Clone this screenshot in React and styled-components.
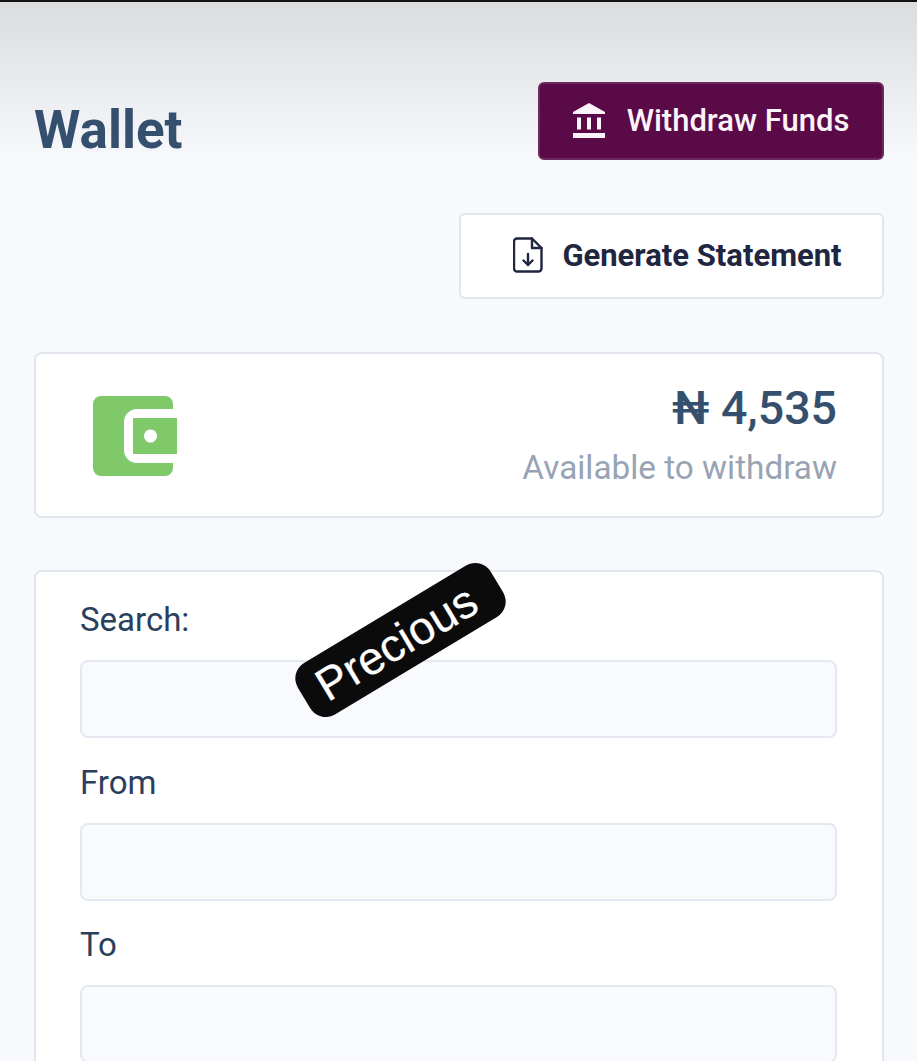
import styled, { createGlobalStyle } from "styled-components";

const GlobalStyle = createGlobalStyle`
  html, body {
    margin: 0;
    height: 100%;
    overflow: hidden;
    background: #f8f9fd;
    font-family: Roboto, "Liberation Sans", sans-serif;
  }
  * { box-sizing: border-box; }
`;

const Page = styled.div`
  position: relative;
  height: 1061px;
  padding: 80px 33px 0 34px;
  overflow: hidden;
  border-top: 2px solid #111;
  background: linear-gradient(#dbdcde 0, #e6e7e9 60px, #f8f9fd 160px);
`;

const Header = styled.header`
  display: flex;
  justify-content: space-between;
  align-items: flex-start;
`;

const Title = styled.h1`
  margin: 17px 0 0;
  font-size: 53px;
  line-height: 62px;
  font-weight: 700;
  color: #35506e;
`;

const Button = styled.button`
  display: flex;
  align-items: center;
  justify-content: center;
  gap: ${(p) => p.$gap}px;
  width: ${(p) => p.$width}px;
  height: ${(p) => p.$height}px;
  padding: 0 0 2px ${(p) => p.$indent || 0}px;
  font-family: inherit;
  font-size: 31px;
  font-weight: ${(p) => p.$weight};
  border-radius: 6px;
  color: ${(p) => (p.$primary ? "#fbf4f9" : "#1f2640")};
  background: ${(p) => (p.$primary ? "#5b0a48" : "#fff")};
  border: 2px solid ${(p) => (p.$primary ? "#6d2a5d" : "#e1e5ee")};
`;

const ActionRow = styled.div`
  display: flex;
  justify-content: flex-end;
  margin-top: 52px;
`;

const Card = styled.section`
  background: #fff;
  border: 2px solid #e1e5ee;
  border-radius: 8px;
`;

const BalanceCard = styled(Card)`
  display: flex;
  justify-content: space-between;
  align-items: center;
  height: 166px;
  margin-top: 53px;
  padding: 2px 45px 0 57px;
`;

const Balance = styled.div`
  padding-bottom: 5px;
  text-align: right;
`;

const Amount = styled.div`
  font-size: 46.5px;
  line-height: 56px;
  font-weight: 500;
  color: #35506e;
`;

const Hint = styled.div`
  margin-top: 12px;
  font-size: 33.3px;
  line-height: 40px;
  color: #98a4b4;
`;

const FilterCard = styled(Card)`
  margin-top: 52px;
  padding: 29px 45px 0 44px;
`;

const Label = styled.label`
  display: block;
  font-size: 33px;
  line-height: 38px;
  color: #2a3f5c;
`;

const Field = styled.input`
  display: block;
  width: 100%;
  height: 78px;
  margin: 21px 0 25.5px;
  background: #f9fafe;
  border: 2px solid #e4e8f0;
  border-radius: 8px;
`;

const Sticker = styled.div`
  position: absolute;
  left: 288px;
  top: 608px;
  width: 225px;
  height: 60px;
  display: flex;
  align-items: center;
  justify-content: center;
  padding: 0 10px 0 0;
  transform: rotate(-31deg);
  border-radius: 18px;
  background: #0b0b0b;
  color: #fff;
  font-family: "Liberation Sans", Arial, sans-serif;
  font-size: 46px;
  -webkit-text-stroke: 0.2px #fff;
`;

const BankIcon = () => (
  <svg width="32" height="35" viewBox="0 0 32 35" fill="#fbf4f9">
    <path d="M16 0 L32 9 V11 H0 V9 Z" />
    <rect x="4" y="14.5" width="4" height="12" />
    <rect x="14" y="14.5" width="4" height="12" />
    <rect x="24" y="14.5" width="4" height="12" />
    <rect x="0" y="30" width="32" height="5" />
  </svg>
);

const FileIcon = () => (
  <svg width="30" height="36" viewBox="0 0 30 36" fill="none" stroke="#1f2640" strokeWidth="2.4" strokeLinejoin="round" strokeLinecap="round">
    <path d="M4 1.5 H19 L28.5 11 V31.5 a3 3 0 0 1 -3 3 H4 a3 3 0 0 1 -3 -3 V4.5 a3 3 0 0 1 3 -3 Z" />
    <path d="M19 1.5 V11 H28.5" />
    <path d="M15 17 V28 M10.5 23.5 L15 28 L19.5 23.5" />
  </svg>
);

const WalletIcon = () => (
  <svg width="84" height="80" viewBox="0 0 84 80" fill="#7fc96b">
    <path d="M8 0 H72 a8 8 0 0 1 8 8 V13 H44 a13 13 0 0 0 -13 13 V54 a13 13 0 0 0 13 13 H80 V72 a8 8 0 0 1 -8 8 H8 a8 8 0 0 1 -8 -8 V8 a8 8 0 0 1 8 -8 Z" />
    <path fillRule="evenodd" d="M40 22 H84 V58 H40 Z M57.5 33.5 a6.5 6.5 0 1 0 0.01 0 Z" />
  </svg>
);

export default function App() {
  return (
    <>
      <GlobalStyle />
      <Page>
        <Header>
          <Title>Wallet</Title>
          <Button $primary $width={346} $height={78} $gap={22} $weight={500}>
            <BankIcon />
            Withdraw Funds
          </Button>
        </Header>
        <ActionRow>
          <Button $width={425} $height={86} $gap={19} $weight={700} $indent={12}>
            <FileIcon />
            Generate Statement
          </Button>
        </ActionRow>
        <BalanceCard>
          <WalletIcon />
          <Balance>
            <Amount>₦ 4,535</Amount>
            <Hint>Available to withdraw</Hint>
          </Balance>
        </BalanceCard>
        <FilterCard>
          <Label htmlFor="search">Search:</Label>
          <Field id="search" />
          <Label htmlFor="from">From</Label>
          <Field id="from" />
          <Label htmlFor="to">To</Label>
          <Field id="to" />
        </FilterCard>
        <Sticker>Precious</Sticker>
      </Page>
    </>
  );
}
